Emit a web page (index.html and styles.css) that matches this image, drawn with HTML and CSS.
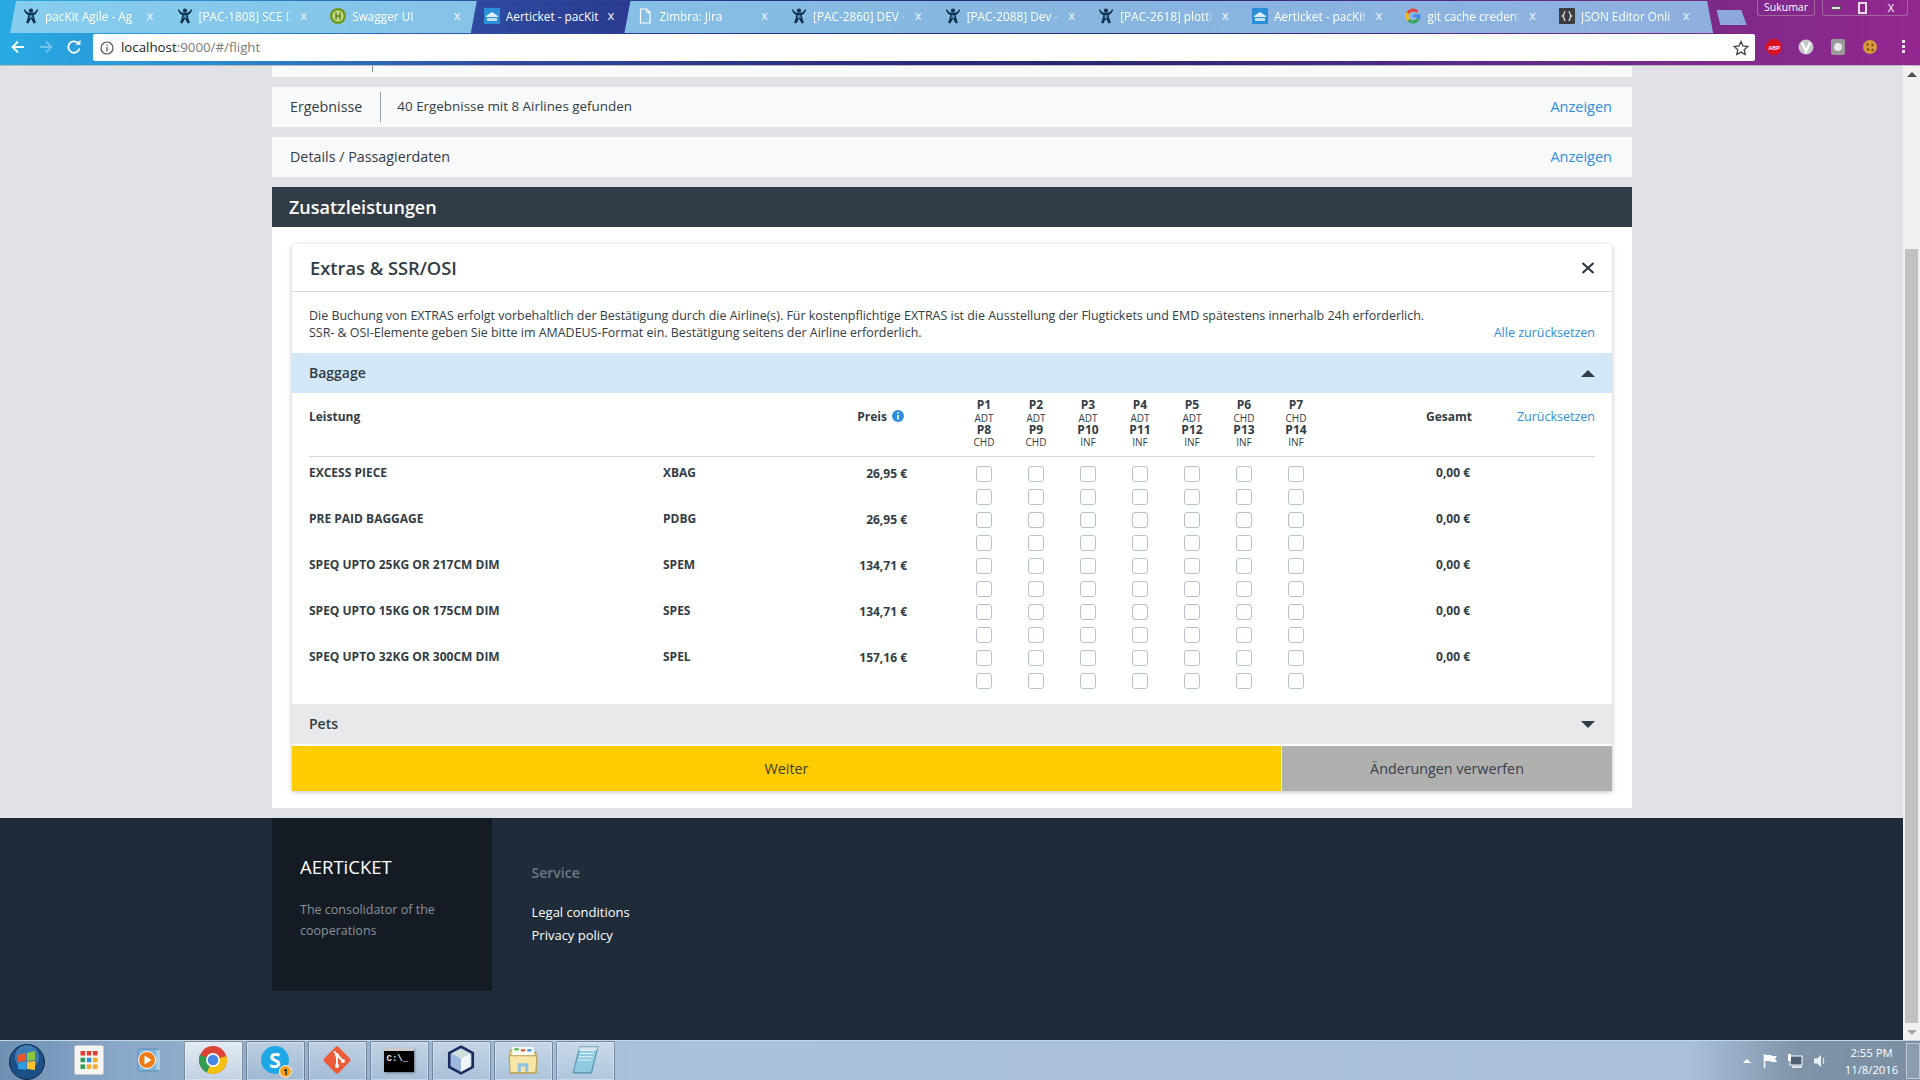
FILE: index.html
```html
<!DOCTYPE html>
<html lang="de">
<head>
<meta charset="utf-8">
<title>Aerticket - pacKit</title>
<link rel="stylesheet" href="styles.css">
</head>
<body>
<svg class="defs" width="0" height="0" aria-hidden="true">
  <symbol id="jira" viewBox="0 0 16 18">
    <circle cx="8" cy="3" r="2.4" fill="#10314f"/>
    <path d="M1 1c1.5 3 3.3 4.6 7 4.6S13.500 4 15 1l1 1.500c-1.300 3-3 4.800-5 5.500l1 4 1.500 4.500-2.500 1-3-5.500-3 5.500-2.500-1L4 12l1-4C3 7.300 1.300 5.500 0 2.500z" fill="#10314f"/>
    <path d="M6.500 8h3l.5 3.500H6z" fill="#4d86b8"/>
  </symbol>
  <symbol id="packit" viewBox="0 0 16 16">
    <rect width="16" height="16" fill="#2a8fd6"/>
    <path d="M2 8l6-4 6 4v1H2z" fill="#dff0fb"/>
    <rect x="3" y="10" width="10" height="3" fill="#bfe0f6"/>
  </symbol>
</svg>

<div class="screen">
  <header class="chrome">
    <div class="tabstrip">
      <div class="tab tab-first"><svg class="fav"><use href="#jira"/></svg><span class="tab-title">pacKit Agile - Ag</span><span class="tab-x">x</span></div>
      <div class="tab"><svg class="fav"><use href="#jira"/></svg><span class="tab-title">[PAC-1808] SCE D</span><span class="tab-x">x</span></div>
      <div class="tab">
        <svg class="fav" viewBox="0 0 16 16"><circle cx="8" cy="8" r="8" fill="#6d9b1e"/><circle cx="8" cy="8" r="5.500" fill="#c9dc8a"/><path d="M6 4.500v7M10 4.500v7M6 8h4" stroke="#4f7a10" stroke-width="1.400"/></svg>
        <span class="tab-title">Swagger UI</span><span class="tab-x">x</span></div>
      <div class="tab tab-active"><svg class="fav"><use href="#packit"/></svg><span class="tab-title">Aerticket - pacKit</span><span class="tab-x">x</span></div>
      <div class="tab">
        <svg class="fav" viewBox="0 0 16 16"><path d="M3.500 1h6l3.500 3.500V15h-9.500z" fill="none" stroke="#fff" stroke-width="1.200"/><path d="M9.500 1v3.500H13" fill="none" stroke="#fff"/></svg>
        <span class="tab-title">Zimbra: Jira</span><span class="tab-x">x</span></div>
      <div class="tab"><svg class="fav"><use href="#jira"/></svg><span class="tab-title">[PAC-2860] DEV -</span><span class="tab-x">x</span></div>
      <div class="tab"><svg class="fav"><use href="#jira"/></svg><span class="tab-title">[PAC-2088] Dev -</span><span class="tab-x">x</span></div>
      <div class="tab"><svg class="fav"><use href="#jira"/></svg><span class="tab-title">[PAC-2618] plotti</span><span class="tab-x">x</span></div>
      <div class="tab"><svg class="fav"><use href="#packit"/></svg><span class="tab-title">Aerticket - pacKit</span><span class="tab-x">x</span></div>
      <div class="tab">
        <svg class="fav" viewBox="0 0 16 16"><circle cx="8" cy="8" r="6" fill="none" stroke="#ea4335" stroke-width="3" stroke-dasharray="12 40" transform="rotate(200 8 8)"/><circle cx="8" cy="8" r="6" fill="none" stroke="#fbbc05" stroke-width="3" stroke-dasharray="8 40" transform="rotate(130 8 8)"/><circle cx="8" cy="8" r="6" fill="none" stroke="#34a853" stroke-width="3" stroke-dasharray="11 40" transform="rotate(30 8 8)"/><path d="M8 6.600h7.500c.2 2-.2 3.500-1 4.800L11.500 10l.3-1.100H8z" fill="#4285f4"/></svg>
        <span class="tab-title">git cache credent</span><span class="tab-x">x</span></div>
      <div class="tab tab-last">
        <svg class="fav" viewBox="0 0 16 16"><rect width="16" height="16" rx="1" fill="#3c3c3c"/><path d="M6.500 3.500c-1.500 0-1.500 1-1.500 2s0 2-1.500 2.500c1.500.5 1.500 1.500 1.500 2.500s0 2 1.500 2M9.500 3.500c1.500 0 1.500 1 1.500 2s0 2 1.500 2.500c-1.500.5-1.500 1.500-1.500 2.500s0 2-1.500 2" fill="none" stroke="#fff" stroke-width="1.100"/></svg>
        <span class="tab-title">JSON Editor Onli</span><span class="tab-x">x</span></div>
      <div class="newtab"></div>
      <div class="winbar">
        <span class="user">Sukumar</span>
        <div class="wincontrols">
          <span class="wc wc-min"><i class="wc-dash"></i></span>
          <span class="wc wc-max"><i class="wc-box"></i></span>
          <span class="wc wc-close">X</span>
        </div>
      </div>
    </div>
    <div class="toolbar">
      <div class="nav">
        <svg class="nav-ico" viewBox="0 0 16 16"><path d="M14 8H3M8 2.500L2.500 8 8 13.500" fill="none" stroke="#fff" stroke-width="1.800"/></svg>
        <svg class="nav-ico nav-dim" viewBox="0 0 16 16"><path d="M2 8h11M8 2.500L13.500 8 8 13.500" fill="none" stroke="#fff" stroke-width="1.800"/></svg>
        <svg class="nav-ico" viewBox="0 0 16 16"><path d="M13.500 9.500A5.700 5.700 0 1 1 12 4" fill="none" stroke="#fff" stroke-width="1.800"/><path d="M9.500 5.800h5v-5z" fill="#fff"/></svg>
      </div>
      <div class="omnibox">
        <svg class="omni-info" viewBox="0 0 14 14"><circle cx="7" cy="7" r="6" fill="none" stroke="#555" stroke-width="1.200"/><path d="M7 6v4.500M7 3.500v1.300" stroke="#555" stroke-width="1.300"/></svg>
        <span class="url"><span class="url-host">localhost</span>:9000/#/flight</span>
        <svg class="star" viewBox="0 0 16 16"><path d="M8 1.500l2 4.500 4.800.5-3.600 3.200 1 4.800L8 12.100l-4.200 2.400 1-4.800L1.200 6.500 6 6z" fill="none" stroke="#444" stroke-width="1.300"/></svg>
      </div>
      <div class="exts">
        <svg class="ext" viewBox="0 0 16 16"><path d="M5 0h6l5 5v6l-5 5H5l-5-5V5z" fill="#d8121f"/><text x="8" y="10.500" class="abp">ABP</text></svg>
        <svg class="ext" viewBox="0 0 16 16"><circle cx="8" cy="8" r="7.500" fill="#c9c9c9"/><path d="M4 3.500l4 9 4-9" fill="none" stroke="#fff" stroke-width="2.200"/></svg>
        <svg class="ext" viewBox="0 0 16 16"><rect x="1" y="0" width="14" height="16" rx="2" fill="#9a9a9a"/><circle cx="8" cy="8" r="4" fill="#e8e8e8"/></svg>
        <svg class="ext" viewBox="0 0 16 16"><circle cx="8" cy="8" r="7" fill="#d89a3c"/><circle cx="5.500" cy="5.500" r="1.200" fill="#7a4a16"/><circle cx="10.500" cy="6" r="1.200" fill="#7a4a16"/><circle cx="6" cy="10.500" r="1.200" fill="#7a4a16"/><circle cx="10.500" cy="11" r="1.200" fill="#7a4a16"/></svg>
        <span class="dots"><i></i><i></i><i></i></span>
      </div>
    </div>
  </header>

  <div class="viewport">
    <main class="page">
      <div class="container">
        <div class="stub"><span class="stub-rule"></span></div>
        <section class="bar">
          <span class="bar-label">Ergebnisse</span>
          <span class="bar-sep"></span>
          <span class="bar-info">40 Ergebnisse mit 8 Airlines gefunden</span>
          <a class="bar-link">Anzeigen</a>
        </section>
        <section class="bar">
          <span class="bar-label">Details / Passagierdaten</span>
          <a class="bar-link">Anzeigen</a>
        </section>
        <h2 class="section-head">Zusatzleistungen</h2>
        <div class="panel">
          <div class="card">
            <div class="card-head">
              <h3 class="card-title">Extras &amp; SSR/OSI</h3>
              <svg class="close" viewBox="0 0 14 14"><path d="M1.500 2l11 10M12.500 2l-11 10" stroke="#2f3842" stroke-width="2.200"/></svg>
            </div>
            <div class="intro">
              <p class="intro-text">Die Buchung von EXTRAS erfolgt vorbehaltlich der Bestätigung durch die Airline(s). Für kostenpflichtige EXTRAS ist die Ausstellung der Flugtickets und EMD spätestens innerhalb 24h erforderlich.<br>SSR- &amp; OSI-Elemente geben Sie bitte im AMADEUS-Format ein. Bestätigung seitens der Airline erforderlich.</p>
              <a class="link-small">Alle zurücksetzen</a>
            </div>
            <div class="acc acc-open"><span>Baggage</span><i class="tri tri-up"></i></div>
            <div class="tbl">
              <div class="grid thead">
                <span class="th">Leistung</span>
                <span></span>
                <span class="th th-price">Preis <svg class="info" viewBox="0 0 12 12"><circle cx="6" cy="6" r="6" fill="#2f8fe0"/><path d="M6 5v4.500M6 2.200v1.500" stroke="#fff" stroke-width="1.600"/></svg></span>
                <span></span>
                <div class="pax">
                  <div class="pax-c"><b>P1</b><small>ADT</small><b>P8</b><small>CHD</small></div>
                  <div class="pax-c"><b>P2</b><small>ADT</small><b>P9</b><small>CHD</small></div>
                  <div class="pax-c"><b>P3</b><small>ADT</small><b>P10</b><small>INF</small></div>
                  <div class="pax-c"><b>P4</b><small>ADT</small><b>P11</b><small>INF</small></div>
                  <div class="pax-c"><b>P5</b><small>ADT</small><b>P12</b><small>INF</small></div>
                  <div class="pax-c"><b>P6</b><small>CHD</small><b>P13</b><small>INF</small></div>
                  <div class="pax-c"><b>P7</b><small>CHD</small><b>P14</b><small>INF</small></div>
                </div>
                <span class="th th-right">Gesamt</span>
                <a class="th-link">Zurücksetzen</a>
              </div>
              <div class="tbody">
                <div class="grid row">
                  <span class="td">EXCESS PIECE</span><span class="td">XBAG</span><span class="td td-price">26,95 €</span><span></span>
                  <div class="boxes"><i></i><i></i><i></i><i></i><i></i><i></i><i></i><i></i><i></i><i></i><i></i><i></i><i></i><i></i></div>
                  <span class="td td-total">0,00 €</span><span></span>
                </div>
                <div class="grid row">
                  <span class="td">PRE PAID BAGGAGE</span><span class="td">PDBG</span><span class="td td-price">26,95 €</span><span></span>
                  <div class="boxes"><i></i><i></i><i></i><i></i><i></i><i></i><i></i><i></i><i></i><i></i><i></i><i></i><i></i><i></i></div>
                  <span class="td td-total">0,00 €</span><span></span>
                </div>
                <div class="grid row">
                  <span class="td">SPEQ UPTO 25KG OR 217CM DIM</span><span class="td">SPEM</span><span class="td td-price">134,71 €</span><span></span>
                  <div class="boxes"><i></i><i></i><i></i><i></i><i></i><i></i><i></i><i></i><i></i><i></i><i></i><i></i><i></i><i></i></div>
                  <span class="td td-total">0,00 €</span><span></span>
                </div>
                <div class="grid row">
                  <span class="td">SPEQ UPTO 15KG OR 175CM DIM</span><span class="td">SPES</span><span class="td td-price">134,71 €</span><span></span>
                  <div class="boxes"><i></i><i></i><i></i><i></i><i></i><i></i><i></i><i></i><i></i><i></i><i></i><i></i><i></i><i></i></div>
                  <span class="td td-total">0,00 €</span><span></span>
                </div>
                <div class="grid row">
                  <span class="td">SPEQ UPTO 32KG OR 300CM DIM</span><span class="td">SPEL</span><span class="td td-price">157,16 €</span><span></span>
                  <div class="boxes"><i></i><i></i><i></i><i></i><i></i><i></i><i></i><i></i><i></i><i></i><i></i><i></i><i></i><i></i></div>
                  <span class="td td-total">0,00 €</span><span></span>
                </div>
              </div>
            </div>
            <div class="acc acc-closed"><span>Pets</span><i class="tri tri-down"></i></div>
            <div class="actions">
              <button class="btn btn-next">Weiter</button>
              <button class="btn btn-discard">Änderungen verwerfen</button>
            </div>
          </div>
        </div>
      </div>
      <footer class="footer">
        <div class="footer-inner">
          <div class="brand">
            <div class="brand-name">AERTiCKET</div>
            <p class="brand-text">The consolidator of the cooperations</p>
          </div>
          <nav class="service">
            <div class="service-head">Service</div>
            <a class="service-link">Legal conditions</a>
            <a class="service-link">Privacy policy</a>
          </nav>
        </div>
      </footer>
    </main>
    <aside class="scrollbar">
      <i class="sb-arrow sb-up"></i>
      <div class="sb-track"><div class="sb-thumb"></div></div>
      <i class="sb-arrow sb-down"></i>
    </aside>
  </div>

  <footer class="taskbar">
    <div class="start">
      <svg class="orb" viewBox="0 0 36 36">
        <circle cx="18" cy="18" r="17.500" fill="#1b4f86" stroke="#0e2b4a"/>
        <circle cx="18" cy="13" r="12" fill="#5aa0d8" opacity=".55"/>
        <path d="M9 11l8-2v8l-8 1z" fill="#e8562a"/><path d="M18 9l8-2v9l-8 1z" fill="#8cc63f"/>
        <path d="M9 19l8-1v8l-8-1z" fill="#2f9fe0"/><path d="M18 18l8-1v9l-8-1z" fill="#f7c12c"/>
      </svg>
    </div>
    <div class="plain-ico plain-apps">
      <svg class="tb-ico-apps" viewBox="0 0 30 30"><rect x=".5" y=".5" width="29" height="29" rx="2" fill="#f6f4f2" stroke="#c8c8c8"/><rect x="6.500" y="6" width="4.500" height="4.500" fill="#e53a2f"/><rect x="12.800" y="6" width="4.500" height="4.500" fill="#e53a2f"/><rect x="19" y="6" width="4.500" height="4.500" fill="#e53a2f"/><rect x="6.500" y="12.700" width="4.500" height="4.500" fill="#2d9e58"/><rect x="12.800" y="12.700" width="4.500" height="4.500" fill="#2b8fe0"/><rect x="19" y="12.700" width="4.500" height="4.500" fill="#f9a825"/><rect x="6.500" y="19.400" width="4.500" height="4.500" fill="#2d9e58"/><rect x="12.800" y="19.400" width="4.500" height="4.500" fill="#f9a825"/><rect x="19" y="19.400" width="4.500" height="4.500" fill="#f9a825"/></svg>
    </div>
    <div class="plain-ico plain-wmp">
      <svg class="tb-ico" viewBox="0 0 28 28"><rect x="3" y="3" width="20" height="22" fill="#7fb3d8" stroke="#5a8fb5"/><rect x="21" y="4" width="4" height="20" fill="#a9cfe6"/><circle cx="12" cy="14" r="8.500" fill="#f07b16" stroke="#fff"/><path d="M9.500 9.500l7 4.500-7 4.500z" fill="#fff"/></svg>
    </div>
    <div class="pins">
      <div class="pin pin-on"><svg class="tb-ico tb-big" viewBox="0 0 28 28"><circle cx="14" cy="14" r="13" fill="#db4437"/><path d="M14 14L26.500 10.500A13 13 0 0 1 8 25.500z" fill="#f4c20d"/><path d="M14 14L8 25.500A13 13 0 0 1 1.800 9z" fill="#2e9e4f"/><circle cx="14" cy="14" r="6.500" fill="#fff"/><circle cx="14" cy="14" r="5" fill="#4a86e8"/></svg></div>
      <div class="pin pin-badge"><svg class="tb-ico tb-big" viewBox="0 0 28 28"><circle cx="14" cy="14" r="13" fill="#1ea7e6"/><text x="14" y="21" class="skype">S</text></svg><span class="badge">1</span></div>
      <div class="pin"><svg class="tb-ico tb-big" viewBox="0 0 28 28"><rect x="4.500" y="4.500" width="19" height="19" rx="2" fill="#ef5a38" transform="rotate(45 14 14)"/><path d="M11 6l7 7M14 9.500v10M14 9.500l5.500 5.500" stroke="#fff" stroke-width="1.800" fill="none"/><circle cx="14" cy="9.500" r="1.900" fill="#fff"/><circle cx="14" cy="19.500" r="1.900" fill="#fff"/><circle cx="19.500" cy="15" r="1.900" fill="#fff"/></svg></div>
      <div class="pin"><div class="cmd"><span class="cmd-text">C:\_</span></div></div>
      <div class="pin"><svg class="tb-ico tb-big" viewBox="0 0 28 28"><path d="M14 1.500L25 7.500v13L14 26.500 3 20.500v-13z" fill="#9db9e0" stroke="#1d2a5e" stroke-width="2.400"/><path d="M14 3.500L23 8l-9 4.500L5 8z" fill="#cfe0d8"/><path d="M14 12.500V25l9-5V8z" fill="#f2f6fb"/></svg></div>
      <div class="pin"><svg class="tb-ico tb-big" viewBox="0 0 28 28"><path d="M2 5h9l2 2h13v19H2z" fill="#f3d98a" stroke="#b79b50"/><rect x="4" y="2" width="20" height="8" fill="#fdfdf5"/><rect x="6" y="3" width="4" height="2" fill="#45b549"/><rect x="12" y="4" width="4" height="2" fill="#e14b3a"/><rect x="18" y="4" width="4" height="2" fill="#3a8fe1"/><path d="M1 10h26l-1 16H2z" fill="#f8e6a6" stroke="#b79b50"/><path d="M9 25v-8h10v8h-3v-5h-4v5z" fill="#8fc4e6"/></svg></div>
      <div class="pin"><svg class="tb-ico tb-big" viewBox="0 0 28 28"><path d="M9 2h17l-6 24H3z" fill="#8fcbe0" stroke="#4f8fa8"/><path d="M10 5h13M9 8h13M8 11h13M7 14h13" stroke="#e6f4f8"/><path d="M9 2h17l-1 3H8z" fill="#d8e4ea"/></svg></div>
    </div>
    <div class="tray">
      <i class="tray-up"></i>
      <svg class="tray-ico" viewBox="0 0 16 16"><path d="M2.500 1v14" stroke="#fff" stroke-width="1.500"/><path d="M3 2h6l1 1h5l-2 3 2 3H9L8 8H3z" fill="#fff"/></svg>
      <svg class="tray-ico" viewBox="0 0 16 16"><rect x="3" y="3" width="12" height="9" fill="#4d6274" stroke="#fff"/><path d="M5 14h10" stroke="#fff" stroke-width="1.500"/><rect x="1" y="1" width="3" height="7" fill="#fff"/></svg>
      <svg class="tray-ico" viewBox="0 0 16 16"><path d="M2 5.500h3L9 2v12L5 10.500H2z" fill="#e8eef4"/><path d="M11 5c1 1.500 1 4.500 0 6" fill="none" stroke="#fff"/></svg>
      <div class="clock"><span>2:55 PM</span><span>11/8/2016</span></div>
      <div class="show-desktop"></div>
    </div>
  </footer>
</div>
</body>
</html>
```

FILE: styles.css
```css
* { box-sizing: border-box; }
html, body { margin: 0; padding: 0; }
body { font-family: "Open Sans", "Noto Sans", sans-serif; color: #323c46; overflow: hidden; }
.defs { position: absolute; }
a { cursor: pointer; }
i { display: block; font-style: normal; }

.screen { width: 1920px; height: 1080px; display: flex; flex-direction: column; overflow: hidden; }

/* browser chrome */
.chrome { height: 66px; flex: none; background: linear-gradient(90deg, #29abe2 0, #2a8ed2 200px, #2e4a9f 500px, #2b2f82 800px, #28276f 1100px, #4d2a86 1400px, #762a88 1650px, #93278f 1920px); border-bottom: 1px solid #b9b9c4; }
.tabstrip { height: 33px; display: flex; padding: 1px 0 0 10px; position: relative; }
.tab { width: 167px; margin-right: -13.4px; height: 32px; flex: none; display: flex; align-items: center; padding: 0 21px 3px 13px; background: linear-gradient(90deg, #85cdee 0, #85b8e0 960px, #8fb0df 1700px) fixed; clip-path: polygon(6px 0, calc(100% - 6px) 0, 100% 100%, 0 100%); color: #fff; font-size: 11.800px; }
.tab-active { background: linear-gradient(90deg, #2e4a9f, #2a3a90); }
.fav { width: 16px; height: 16px; flex: none; margin-right: 6px; }
.tab-title { flex: 1; overflow: hidden; white-space: nowrap; min-width: 0; -webkit-mask-image: linear-gradient(90deg, #000 calc(100% - 6px), transparent); mask-image: linear-gradient(90deg, #000 calc(100% - 6px), transparent); }
.tab-active .tab-title { -webkit-mask-image: none; mask-image: none; }
.tab-x { width: 12px; margin-left: 6px; flex: none; font-size: 13px; line-height: 1; text-align: center; color: #eef4fb; }
.newtab { width: 30px; height: 15px; margin: 9px 0 0 17px; flex: none; background: #8fa8dc; clip-path: polygon(0 0, 82% 0, 100% 100%, 12% 100%); }
.winbar { margin-left: auto; display: flex; align-items: flex-start; margin-top: -1px; padding-right: 12px; gap: 7px; }
.user { width: 58px; height: 16px; border: 1px solid #a4669f; border-top: 0; border-radius: 0 0 3px 3px; color: #fff; font-size: 10.5px; line-height: 14px; text-align: center; }
.wincontrols { display: flex; height: 16px; border: 1px solid #a4669f; border-top: 0; border-radius: 0 0 3px 3px; }
.wc { width: 26px; display: flex; align-items: center; justify-content: center; color: #fff; font-size: 11px; line-height: 1; }
.wc-close { width: 32px; }
.wc-dash { width: 10px; height: 4px; background: #e8dbe8; border: 1px solid #555; }
.wc-box { width: 9px; height: 12px; border: 2px solid #e8dbe8; }
.toolbar { height: 32px; display: flex; align-items: flex-start; }
.nav { width: 93px; height: 27px; display: flex; align-items: center; gap: 12px; padding-left: 10px; flex: none; }
.nav-ico { width: 16px; height: 16px; flex: none; }
.nav-dim { opacity: .35; }
.omnibox { width: 1662px; height: 27px; margin-top: 1px; background: #fff; border-radius: 2px; display: flex; align-items: center; padding: 0 6px 0 7px; flex: none; }
.omni-info { width: 14px; height: 14px; flex: none; }
.url { margin-left: 7px; font-size: 13.300px; line-height: 18px; padding-bottom: 2px; color: #7b7b7b; flex: 1; }
.url-host { color: #222; }
.star { width: 16px; height: 16px; flex: none; }
.exts { display: flex; align-items: center; height: 27px; padding-left: 11px; gap: 16px; }
.ext { width: 16px; height: 16px; flex: none; }
.abp { font: 700 5.500px "Liberation Sans", sans-serif; fill: #fff; text-anchor: middle; }
.dots { display: flex; flex-direction: column; gap: 2px; margin-left: 8px; }
.dots i { width: 3px; height: 3px; background: #e9e3ec; }

/* page */
.viewport { flex: 1; display: flex; min-height: 0; }
.page { width: 1903px; flex: none; background: #e1e2e6; display: flex; flex-direction: column; }
.container { width: 1360px; margin-left: 272px; }
.stub { height: 11px; background: #f8f9fb; padding-left: 100px; }
.stub-rule { display: block; width: 1px; height: 6px; background: #8c9198; }
.bar { height: 40px; margin-top: 10px; background: #f8f9fb; display: flex; align-items: center; padding: 0 20px 2px 18px; }
.bar-label { font-size: 14.300px; color: #323c46; }
.bar-sep { width: 1px; height: 30px; margin: 2px 16px 0 18px; background: #9ca2a9; }
.bar-info { font-size: 13.400px; color: #323c46; }
.bar-link { margin-left: auto; font-size: 14.500px; color: #2f8fe0; }
.section-head { height: 40px; margin: 10px 0 0; padding-left: 17px; background: #323c46; color: #fff; font-size: 18px; font-weight: 600; line-height: 40px; }
.panel { background: #fff; padding: 17px 20px; }
.card { background: #fff; box-shadow: 0 1px 5px rgba(0, 0, 0, .25); border-radius: 3px 3px 0 0; }
.card-head { height: 48px; display: flex; align-items: center; justify-content: space-between; padding: 0 17px 0 18px; border-bottom: 1px solid #d9dade; }
.card-title { margin: 0; font-size: 18.300px; font-weight: 600; color: #323c46; }
.close { width: 14px; height: 14px; flex: none; }
.intro { height: 61px; display: flex; align-items: flex-end; justify-content: space-between; padding: 0 17px 12px; }
.intro-text { margin: 0; font-size: 12.450px; line-height: 17px; color: #323c46; white-space: nowrap; }
.link-small { font-size: 12.500px; line-height: 17px; color: #2f8fe0; white-space: nowrap; }
.acc { height: 40px; display: flex; align-items: center; justify-content: space-between; padding: 0 17px 2px; font-size: 14px; font-weight: 600; color: #323c46; }
.acc-open { background: #d3e8f7; }
.acc-closed { background: #e8e9eb; }
.tri { width: 0; height: 0; margin-top: 2px; border-left: 7px solid transparent; border-right: 7px solid transparent; }
.tri-up { border-bottom: 7px solid #323c46; }
.tri-down { border-top: 7px solid #323c46; }
.tbl { padding: 0 17px; }
.grid { display: grid; grid-template-columns: 354px 120px 124px 51px 364px 150px 123px; }
.thead { height: 64px; border-bottom: 1px solid #d9dade; align-items: start; }
.th { font-size: 12px; font-weight: 700; line-height: 18px; padding-top: 15px; color: #323c46; }
.th-price { display: flex; align-items: flex-start; justify-content: flex-end; gap: 5px; padding-right: 3px; }
.info { width: 12px; height: 12px; margin-top: 2px; flex: none; }
.th-right { text-align: right; }
.th-link { font-size: 12.500px; line-height: 18px; padding-top: 15px; color: #2f8fe0; text-align: right; white-space: nowrap; }
.pax { display: grid; grid-template-columns: repeat(7, 52px); padding-top: 6px; }
.pax-c { display: flex; flex-direction: column; align-items: center; }
.pax-c b { font-size: 12px; font-weight: 700; line-height: 12.500px; }
.pax-c small { font-size: 10px; line-height: 12px; }
.tbody { padding: 9px 0 8px; }
.row { height: 46px; }
.td { font-size: 12px; font-weight: 700; line-height: 13px; color: #323c46; }
.td-price { text-align: right; line-height: 15px; }
.td-total { text-align: right; padding-right: 2px; }
.boxes { display: grid; grid-template-columns: repeat(7, 16px); column-gap: 36px; row-gap: 7px; padding-left: 18px; align-content: start; }
.boxes i { width: 16px; height: 16px; border: 1px solid #b9c0c9; border-radius: 3px; background: #fff; }
.actions { display: flex; gap: 1px; margin-top: 2px; height: 45px; }
.btn { border: 0; font: 400 14.300px "Open Sans", "Noto Sans", sans-serif; padding: 0; }
.btn-next { flex: 1; background: #ffcc00; color: #3c3a22; }
.btn-discard { width: 330px; background: #b0b1af; color: #38404a; }

/* footer */
.footer { flex: 1; margin-top: 10px; background: #1f2b38; }
.footer-inner { margin-left: 272px; display: flex; }
.brand { width: 220px; height: 173px; background: #141b23; padding: 38px 20px 0 28px; }
.brand-name { font-size: 18.500px; line-height: 22px; color: #fff; }
.brand-text { margin: 21px 0 0; font-size: 12.500px; line-height: 21px; color: #8a939c; }
.service { padding: 45px 0 0 39.500px; display: flex; flex-direction: column; }
.service-head { font-size: 14px; font-weight: 600; line-height: 20px; color: #6c7784; margin-bottom: 18px; }
.service-link { font-size: 13px; line-height: 23px; color: #fff; }

/* scrollbar */
.scrollbar { width: 17px; flex: none; background: #f1f1f1; display: flex; flex-direction: column; align-items: center; }
.sb-track { flex: 1; width: 17px; padding: 167px 2px 0; }
.sb-thumb { height: 774px; background: #c1c1c1; }
.sb-arrow { width: 0; height: 0; border-left: 5px solid transparent; border-right: 5px solid transparent; margin: 6px 0 5px; }
.sb-up { border-bottom: 5px solid #505050; }
.sb-down { border-top: 5px solid #a3a3a3; }

/* taskbar */
.taskbar { height: 40px; flex: none; display: flex; align-items: stretch; border-top: 1px solid #c7d6e4; background: linear-gradient(90deg, #6f90b2 0, #8aa8c8 120px, #a9c2dc 640px, #a8c0da 1690px, #7e93a8 1800px, #7c8fa3 1920px); }
.start { width: 54px; display: flex; align-items: center; justify-content: center; flex: none; padding-top: 2px; }
.orb { width: 36px; height: 36px; }
.plain-ico { display: flex; align-items: center; justify-content: center; flex: none; padding-bottom: 2px; }
.plain-apps { width: 70px; }
.plain-wmp { width: 50px; }
.tb-ico-apps { width: 30px; height: 30px; }
.tb-ico { width: 28px; height: 28px; flex: none; }
.tb-big { width: 30px; height: 30px; }
.pins { display: flex; gap: 3px; margin-left: 10px; }
.pin { width: 59px; position: relative; display: flex; align-items: center; justify-content: center; padding: 0 2px 2px 0; border: 1px solid rgba(60, 80, 100, .55); border-bottom: 0; border-radius: 2px 2px 0 0; background: linear-gradient(180deg, rgba(255, 255, 255, .4), rgba(255, 255, 255, .12)); box-shadow: inset 0 0 0 1px rgba(255, 255, 255, .35); }
.pin-on { background: linear-gradient(180deg, rgba(255, 255, 255, .75), rgba(255, 255, 255, .45)); }
.skype { font: 700 20px "Open Sans", sans-serif; fill: #fff; text-anchor: middle; }
.badge { position: absolute; left: 32px; top: 23px; width: 13px; height: 13px; border-radius: 50%; background: #f9a11b; border: 1px solid #fff; font-size: 8px; font-weight: 700; line-height: 11px; text-align: center; color: #111; }
.cmd { width: 30px; height: 24px; background: #000; border-top: 3px solid #c9c9c9; box-shadow: 1px 1px 2px rgba(0, 0, 0, .4); }
.cmd-text { display: block; font: 700 9px/16px "Liberation Mono", monospace; color: #eee; padding-left: 3px; white-space: nowrap; }
.tray { margin-left: auto; display: flex; align-items: center; }
.tray-up { width: 0; height: 0; border-left: 4px solid transparent; border-right: 4px solid transparent; border-bottom: 4px solid #fff; margin-right: 11px; }
.tray-ico { width: 16px; height: 16px; margin-right: 9px; flex: none; }
.clock { width: 69px; display: flex; flex-direction: column; align-items: center; font: 400 11.300px/17px "Open Sans", sans-serif; color: #fff; }
.show-desktop { width: 14px; height: 36px; border: 1px solid rgba(255, 255, 255, .45); background: rgba(255, 255, 255, .12); }
```
